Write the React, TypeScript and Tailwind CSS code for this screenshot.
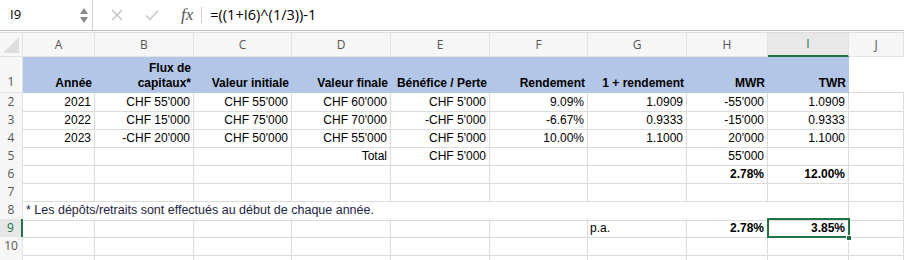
import React from "react";

const GRID = "grid grid-cols-[23px_72px_99px_98px_99px_99px_98px_99px_81px_81px_1fr]";
const COL_LETTERS = ["A", "B", "C", "D", "E", "F", "G", "H", "I", "J"];

type Row = { n: number; cells: (string | null)[]; bold?: number[] };

const dataRows: Row[] = [
  { n: 2, cells: ["2021", "CHF 55'000", "CHF 55'000", "CHF 60'000", "CHF 5'000", "9.09%", "1.0909", "-55'000", "1.0909", null] },
  { n: 3, cells: ["2022", "CHF 15'000", "CHF 75'000", "CHF 70'000", "-CHF 5'000", "-6.67%", "0.9333", "-15'000", "0.9333", null] },
  { n: 4, cells: ["2023", "-CHF 20'000", "CHF 50'000", "CHF 55'000", "CHF 5'000", "10.00%", "1.1000", "20'000", "1.1000", null] },
  { n: 5, cells: [null, null, null, "Total", "CHF 5'000", null, null, "55'000", null, null] },
  { n: 6, cells: [null, null, null, null, null, null, null, "2.78%", "12.00%", null], bold: [7, 8] },
  { n: 7, cells: [null, null, null, null, null, null, null, null, null, null] },
];

function RowHead({ n, active, bottom }: { n?: number; active?: boolean; bottom?: boolean }) {
  return (
    <div
      className={`flex justify-center border-b text-[12px] font-normal ${bottom ? "items-end pb-[1px]" : "items-center"} ${
        active
          ? "border-r-2 border-r-[#217346] border-b-[#e3e3e3] bg-[#e6e6e6] text-[#217346]"
          : "border-r border-[#e3e3e3] bg-[#f7f7f7] text-[#555]"
      }`}
      style={{ fontFamily: '"Open Sans", "Noto Sans", sans-serif' }}
    >
      {n}
    </div>
  );
}

function Cell({ children, className = "" }: { children?: React.ReactNode; className?: string }) {
  return (
    <div className={`flex items-center justify-end overflow-visible whitespace-nowrap border-b border-r border-[#dcdcdc] pr-[3px] ${className}`}>
      {children}
    </div>
  );
}

export default function App() {
  return (
    <div
      className="h-[260px] w-[904px] overflow-hidden bg-white text-black"
      style={{ fontFamily: '"Liberation Sans", Arial, sans-serif' }}
    >
      {/* Formula bar */}
      <div className="flex h-[31px] items-center border-b border-[#b9b9b9]">
        <div className="flex h-full w-[93px] items-center justify-between border-r border-[#cfcfcf] pl-[10px] pr-[4px]">
          <span className="text-[13px]" style={{ fontFamily: '"Open Sans", sans-serif' }}>I9</span>
          <div className="flex flex-col items-center gap-[3px]">
            <div className="h-0 w-0 border-x-[4px] border-b-[6px] border-x-transparent border-b-[#8a8a8a]" />
            <div className="h-0 w-0 border-x-[4px] border-t-[6px] border-x-transparent border-t-[#8a8a8a]" />
          </div>
        </div>
        <div className="flex h-full items-center pl-[18px]">
          <svg width="12" height="12" viewBox="0 0 12 12" className="mr-[22px]">
            <path d="M1 1 L11 11 M11 1 L1 11" stroke="#c6c6c6" strokeWidth="1.6" />
          </svg>
          <svg width="14" height="12" viewBox="0 0 14 12" className="mr-[22px]">
            <path d="M1 6.5 L5 10.5 L13 1.5" stroke="#c6c6c6" strokeWidth="1.5" fill="none" />
          </svg>
          <span className="mr-[8px] text-[17px] italic text-[#555]" style={{ fontFamily: '"Liberation Serif", serif' }}>
            fx
          </span>
          <div className="mr-[8px] h-[16px] w-px bg-[#d0d0d0]" />
          <span className="text-[14.5px]" style={{ fontFamily: '"Open Sans", sans-serif' }}>
            =((1+I6)^(1/3))-1
          </span>
        </div>
      </div>
      <div className="h-[1px] bg-white" />

      {/* Column headers */}
      <div
        className={`${GRID} h-[25px] border-t border-[#dcdcdc] text-[12px] text-[#555]`}
        style={{ fontFamily: '"Open Sans", "Noto Sans", sans-serif' }}
      >
        <div className="relative border-b border-r border-[#e3e3e3] bg-[#f7f7f7]">
          <div className="absolute bottom-[3px] right-[3px] h-0 w-0 border-b-[16px] border-l-[16px] border-l-transparent border-b-[#dedede]" />
        </div>
        {COL_LETTERS.map((c) => (
          <div
            key={c}
            className={`flex items-center justify-center ${
              c === "I"
                ? "border-b-2 border-r border-b-[#217346] border-r-[#e3e3e3] bg-[#e9e9e9] text-[#217346]"
                : "border-b border-r border-[#e3e3e3] bg-[#f7f7f7]"
            }`}
          >
            {c}
          </div>
        ))}
      </div>

      {/* Row 1 */}
      <div className={`${GRID} h-[36px] text-[12px] font-bold`}>
        <RowHead n={1} bottom />
        {["Année", "Flux de\ncapitaux*", "Valeur initiale", "Valeur finale", "Bénéfice / Perte", "Rendement", "1 + rendement", "MWR", "TWR"].map((t) => (
          <div
            key={t}
            className="flex items-end justify-end whitespace-pre-line bg-[#b4c6e7] pb-[2px] pr-[3px] text-right leading-[15px]"
          >
            {t}
          </div>
        ))}
        <div className="border-b border-[#dcdcdc]" />
      </div>

      {/* Rows 2-7 */}
      {dataRows.map((r) => (
        <div key={r.n} className={`${GRID} h-[18px] text-[12px]`}>
          <RowHead n={r.n} />
          {r.cells.map((c, i) => (
            <Cell key={i} className={r.bold?.includes(i) ? "font-bold" : ""}>
              {c}
            </Cell>
          ))}
        </div>
      ))}

      {/* Row 8 */}
      <div className={`${GRID} h-[18px] text-[12px]`}>
        <RowHead n={8} />
        <div className="col-span-8 flex items-center whitespace-nowrap border-b border-[#dcdcdc] pl-[3px] text-[12.5px] text-[#1c2541]">
          * Les dépôts/retraits sont effectués au début de chaque année.
        </div>
        <Cell />
        <Cell />
      </div>

      {/* Row 9 */}
      <div className={`${GRID} h-[18px] text-[12px]`}>
        <RowHead n={9} active />
        <Cell />
        <Cell />
        <Cell />
        <Cell />
        <Cell />
        <Cell />
        <Cell className="justify-start pl-[2px]">p.a.</Cell>
        <Cell className="font-bold">2.78%</Cell>
        <div className="relative flex items-center justify-end border-b border-r border-[#dcdcdc] pr-[3px] font-bold">
          3.85%
          <div className="absolute left-[-1px] top-[-1px] h-[20px] w-[83px] border-2 border-[#217346]" />
          <div className="absolute bottom-[-4px] right-[-4px] h-[6px] w-[6px] border border-white bg-[#217346]" />
        </div>
        <Cell />
      </div>

      {/* Row 10 and the top of row 11 */}
      {[10, 11].map((n) => (
        <div key={n} className={`${GRID} h-[18px] text-[12px]`}>
          <RowHead n={n === 10 ? n : undefined} />
          {COL_LETTERS.map((c) => (
            <Cell key={c} />
          ))}
        </div>
      ))}
    </div>
  );
}
